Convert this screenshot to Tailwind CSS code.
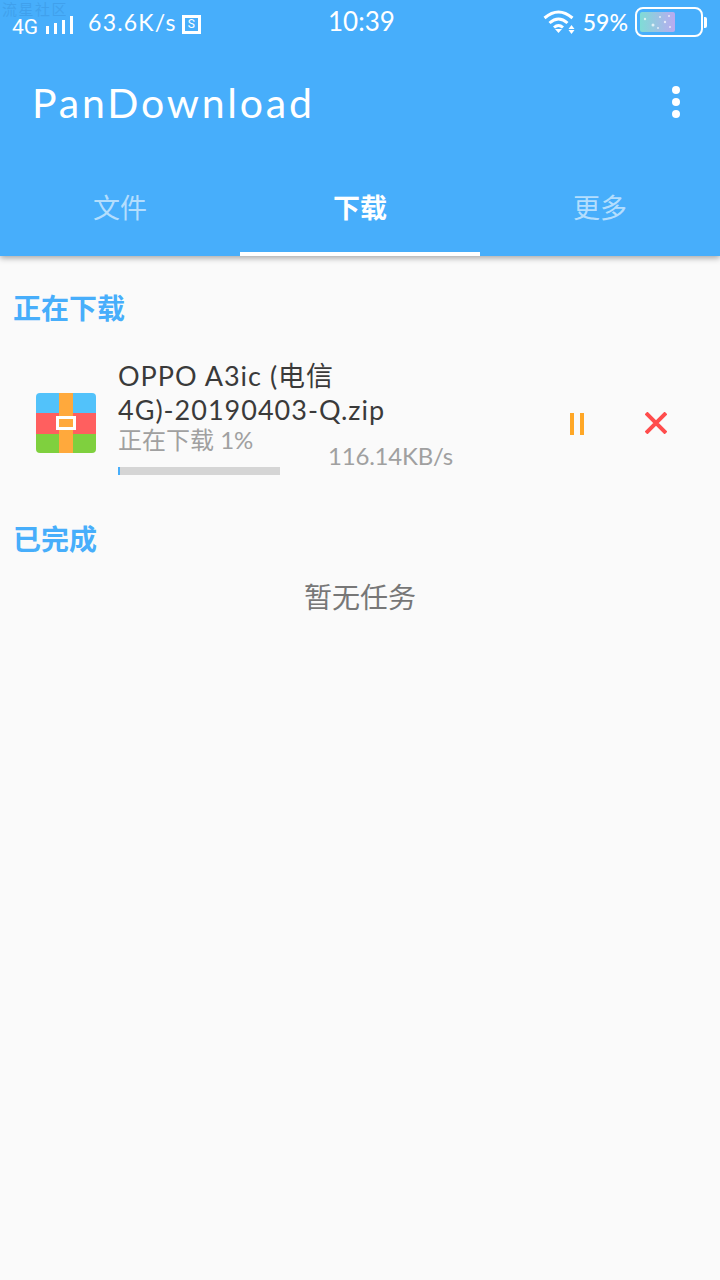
<!DOCTYPE html>
<html lang="en">

<head>
    <meta charset="UTF-8">
    <meta name="viewport" content="width=device-width, initial-scale=1.0">
    <title>PanDownload</title>
    <script src="https://cdn.jsdelivr.net/npm/@tailwindcss/browser@4"></script>
</head>

<body class="bg-[#fafafa] font-['Lato','Noto_Sans_CJK_SC',sans-serif]">
    <div class="relative w-[720px] h-[1280px] overflow-hidden">
        <!-- watermark -->
        <div class="absolute left-[2px] top-[1px] z-10 text-[15px] leading-[16px] tracking-[1.500px] text-[#3d9be6]/70">流星社区</div>

        <header class="bg-[#47aefb] h-[256px] flex flex-col shadow-[0_2px_6px_rgba(0,0,0,0.35)] relative">
            <!-- status bar -->
            <div class="h-[44px] flex items-center justify-between text-white relative">
                <div class="flex items-center pl-[12px] pt-[6px]">
                    <span class="text-[21px] leading-[16px] mt-[3px] font-['Roboto',sans-serif]">4G</span>
                    <div class="flex items-end gap-[5px] ml-[8px] h-[18px]">
                        <span class="w-[3px] h-[8px] bg-white"></span>
                        <span class="w-[3px] h-[11px] bg-white"></span>
                        <span class="w-[3px] h-[14px] bg-white"></span>
                        <span class="w-[3px] h-[18px] bg-white"></span>
                    </div>
                    <span class="ml-[15px] text-[23px] leading-none tracking-[1.2px] -mt-[6px]">63.6K/s</span>
                    <span class="ml-[5px] -mt-[2px] w-[19px] h-[19px] border-[3px] border-white flex items-center justify-center text-[12px] leading-none font-['Roboto',sans-serif]">S</span>
                </div>
                <div class="absolute left-[328px] top-[5px] text-[26px] leading-[32px]">10:39</div>
                <div class="flex items-center pr-[13px]">
                    <svg width="33" height="26" viewBox="0 0 32 26" fill="none" stroke="white" stroke-width="3">
                        <path d="M1 9 Q15 -3 29 9" />
                        <path d="M6 14 Q15 6 24 14" />
                        <path d="M10.500 18.500 Q15 14.500 19.500 18.500" />
                        <path d="M11.500 20 L18.500 20 L15 24 Z" fill="white" stroke="none" />
                        <path d="M28 19 L31 23 L25 23 Z M25 24 L31 24 L28 28 Z" fill="white" stroke="none" transform="translate(0 -3)" />
                    </svg>
                    <span class="ml-[7px] text-[23px] leading-none font-medium">59%</span>
                    <div class="ml-[7px] relative w-[68px] h-[30px] rounded-[8px] border-[2px] border-white p-[3px]">
                        <svg width="35" height="20" viewBox="0 0 35 20">
                            <defs>
                                <linearGradient id="batteryFill" x1="0" x2="1" y1="0" y2="0">
                                    <stop offset="0" stop-color="#7fdcd6" />
                                    <stop offset="1" stop-color="#b9aaf0" />
                                </linearGradient>
                            </defs>
                            <rect width="35" height="20" rx="2" fill="url(#batteryFill)" />
                            <g fill="white" fill-opacity="0.7">
                                <circle cx="5" cy="7" r="1.200" />
                                <circle cx="13" cy="13" r="1.500" />
                                <circle cx="20" cy="5" r="1" />
                                <circle cx="25" cy="10" r="1.200" />
                                <circle cx="29" cy="4" r="1" />
                                <circle cx="18" cy="16" r="1" />
                                <circle cx="30" cy="15" r="1" />
                            </g>
                        </svg>
                    </div>
                    <span class="w-[3px] h-[11px] bg-white rounded-r-[2px] ml-[1px]"></span>
                </div>
            </div>

            <!-- toolbar -->
            <div class="h-[116px] flex items-center justify-between pl-[32px] pr-[40px] text-white">
                <h1 class="text-[41px] leading-none tracking-[2.8px] font-normal">PanDownload</h1>
                <div class="flex flex-col gap-[4px]">
                    <span class="w-[8px] h-[8px] rounded-full bg-white"></span>
                    <span class="w-[8px] h-[8px] rounded-full bg-white"></span>
                    <span class="w-[8px] h-[8px] rounded-full bg-white"></span>
                </div>
            </div>

            <!-- tabs -->
            <nav class="h-[96px] grid grid-cols-3 text-[27px] leading-none text-center">
                <div class="flex items-start justify-center pt-[34px] text-white/60">文件</div>
                <div class="flex items-start justify-center pt-[34px] text-white font-bold border-b-[4px] border-white">下载</div>
                <div class="flex items-start justify-center pt-[34px] text-white/60">更多</div>
            </nav>
        </header>

        <main>
            <h2 class="pl-[13px] pt-[37px] text-[28px] leading-[30px] font-bold text-[#47aefb]">正在下载</h2>

            <div class="flex items-center mt-[36px] pl-[36px]">
                <!-- archive icon -->
                <div class="relative w-[60px] h-[60px] rounded-[4px] overflow-hidden flex flex-col shrink-0">
                    <div class="h-[20px] bg-[#52c2fa]"></div>
                    <div class="h-[21px] bg-[#ff5f5f]"></div>
                    <div class="h-[19px] bg-[#7fd03e]"></div>
                    <div class="absolute left-[23px] top-0 w-[14px] h-[60px] bg-[#ffa93c]"></div>
                    <div class="absolute left-[20px] top-[23px] w-[20px] h-[14px] border-[3px] border-white"></div>
                </div>

                <div class="ml-[22px] w-[334px] shrink-0 pb-[12px]">
                    <div class="text-[27px] leading-[34px] tracking-[1px] whitespace-nowrap text-[#3a3a3a]">OPPO A3ic (电信<br>4G)-20190403-Q.zip</div>
                    <div class="flex items-end">
                        <div class="w-[210px] shrink-0">
                            <div class="text-[24px] leading-[28px] -mt-[1px] text-[#a0a0a0]">正在下载 1%</div>
                            <div class="w-[162px] h-[8px] mt-[13px] bg-[#d5d5d5]">
                                <div class="w-[2px] h-full bg-[#47aefb]"></div>
                            </div>
                        </div>
                        <div class="text-[24px] leading-[28px] tracking-[-0.2px] whitespace-nowrap text-[#a0a0a0] mb-[5px]">116.14KB/s</div>
                    </div>
                </div>

                <!-- pause -->
                <div class="ml-[118px] mt-[2px] flex gap-[6px]">
                    <span class="w-[4px] h-[22px] bg-[#ffa726]"></span>
                    <span class="w-[4px] h-[22px] bg-[#ffa726]"></span>
                </div>
                <!-- cancel -->
                <svg class="ml-[61px]" width="22" height="22" viewBox="0 0 22 22" stroke="#ff4c4c" stroke-width="4">
                    <path d="M1 1 L21 21 M21 1 L1 21" />
                </svg>
            </div>

            <h2 class="pl-[13px] mt-[37px] text-[28px] leading-[30px] font-bold text-[#47aefb]">已完成</h2>
            <p class="mt-[28px] text-center text-[28px] leading-[30px] text-[#777]">暂无任务</p>
        </main>
    </div>
</body>

</html>
